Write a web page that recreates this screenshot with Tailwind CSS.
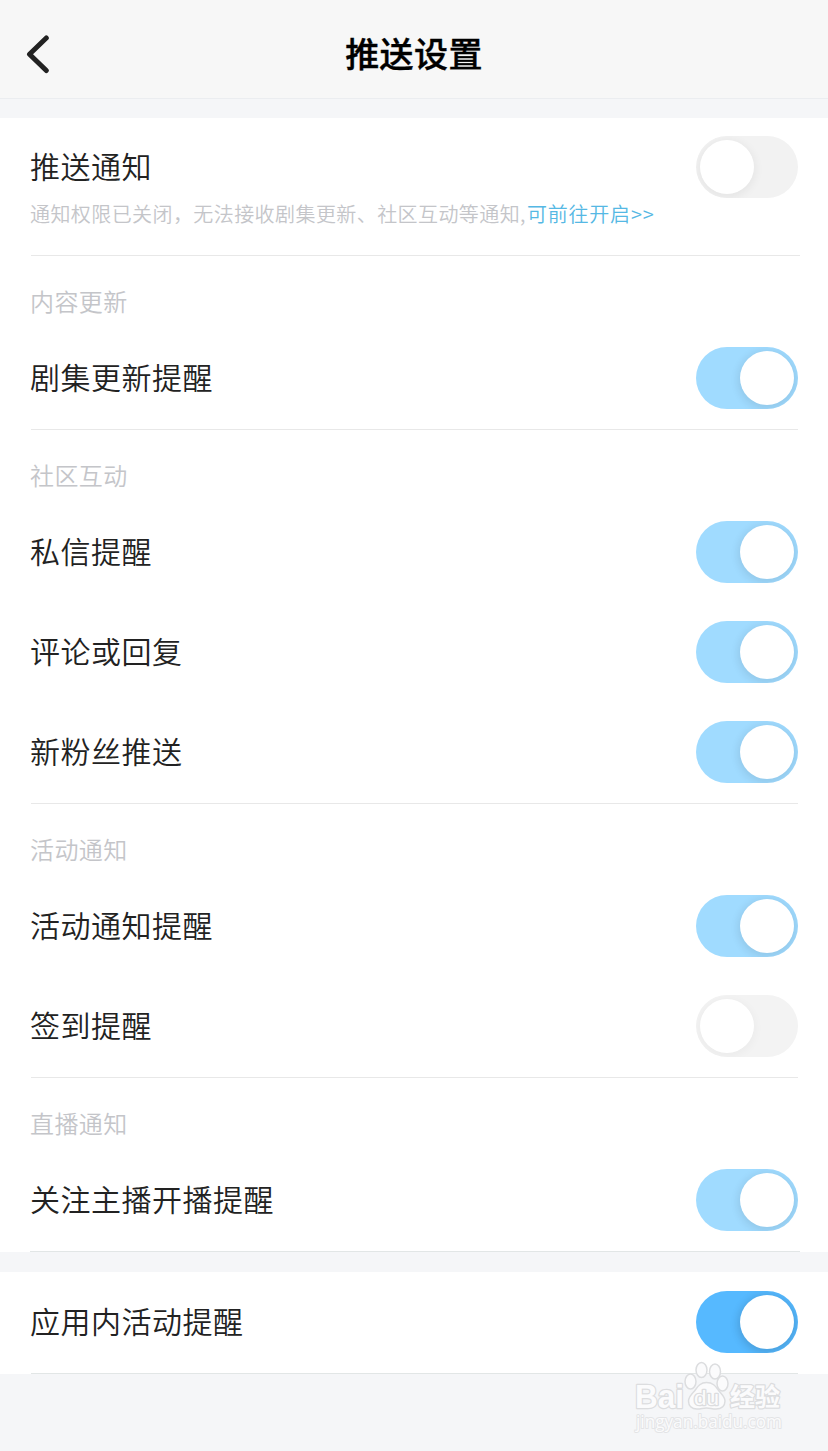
<!DOCTYPE html>
<html lang="zh-CN">
<head>
    <meta charset="UTF-8">
    <meta name="viewport" content="width=device-width, initial-scale=1.0">
    <title>推送设置</title>
    <script src="https://cdn.jsdelivr.net/npm/@tailwindcss/browser@4"></script>
</head>
<body class="bg-[#f5f6f8] font-['Noto_Sans_CJK_SC',sans-serif] font-[350] text-[#222222]">
    <div class="relative w-[828px] h-[1451px] overflow-hidden">

        <header class="grid grid-cols-3 items-center h-[99px] pt-2.5 px-6 bg-[#f7f7f7] border-b border-[#ebedf0]">
            <button class="justify-self-start" aria-label="返回">
                <svg class="w-7 h-10" viewBox="0 0 28 40" fill="none" stroke="#222" stroke-width="5" stroke-linecap="round" stroke-linejoin="round">
                    <path d="M22.3 4 5.5 20.2 22.3 36.5"/>
                </svg>
            </button>
            <h1 class="justify-self-center pb-0.5 text-[34px] leading-10 tracking-[0.4px] font-medium text-black whitespace-nowrap [-webkit-text-stroke:0.4px_black]">推送设置</h1>
        </header>

        <main class="mt-[19px]">
            <!-- Notificaciones generales -->
            <section class="h-[138px] bg-white px-[30px] pt-[18px] flex flex-col">
                <div class="flex justify-between items-center h-[62px]">
                    <span class="pb-1 text-[30px] leading-10 tracking-[0.5px]">推送通知</span>
                    <div class="w-[102px] h-[62px] rounded-full bg-[#f2f2f2] p-1 overflow-hidden">
                        <div class="size-[54px] rounded-full bg-white shadow-[0_2px_8px_2px_rgba(0,0,0,0.05)]"></div>
                    </div>
                </div>
                <p class="mt-1 text-xl leading-6 tracking-[0.42px] text-[#c4c5c9] whitespace-nowrap">通知权限已关闭，无法接收剧集更新、社区互动等通知,<a class="ml-px tracking-[0.8px] text-[#55b8e4]">可前往开启&gt;&gt;</a></p>
                <div class="mt-auto h-px w-[769px] ml-px bg-[#e8e8e8]"></div>
            </section>

            <section class="bg-white px-[30px]">
                <h2 class="h-[72px] pt-[33px] text-2xl leading-6 tracking-[0.4px] font-[350] text-[#c4c5c9]">内容更新</h2>
                <div class="flex justify-between items-center h-[100px]">
                    <span class="pb-1 text-[30px] leading-10 tracking-[0.5px]">剧集更新提醒</span>
                    <div class="w-[102px] h-[62px] rounded-full bg-[#a0dbff] p-1 overflow-hidden flex justify-end">
                        <div class="size-[54px] rounded-full bg-white shadow-[0_2px_8px_2px_rgba(0,0,0,0.09)]"></div>
                    </div>
                </div>
                <div class="mt-px h-px ml-px bg-[#e8e8e8]"></div>
            </section>

            <section class="bg-white px-[30px]">
                <h2 class="h-[72px] pt-[33px] text-2xl leading-6 tracking-[0.4px] font-[350] text-[#c4c5c9]">社区互动</h2>
                <div class="flex justify-between items-center h-[100px]">
                    <span class="pb-1 text-[30px] leading-10 tracking-[0.5px]">私信提醒</span>
                    <div class="w-[102px] h-[62px] rounded-full bg-[#a0dbff] p-1 overflow-hidden flex justify-end">
                        <div class="size-[54px] rounded-full bg-white shadow-[0_2px_8px_2px_rgba(0,0,0,0.09)]"></div>
                    </div>
                </div>
                <div class="flex justify-between items-center h-[100px]">
                    <span class="pb-1 text-[30px] leading-10 tracking-[0.5px]">评论或回复</span>
                    <div class="w-[102px] h-[62px] rounded-full bg-[#a0dbff] p-1 overflow-hidden flex justify-end">
                        <div class="size-[54px] rounded-full bg-white shadow-[0_2px_8px_2px_rgba(0,0,0,0.09)]"></div>
                    </div>
                </div>
                <div class="flex justify-between items-center h-[100px]">
                    <span class="pb-1 text-[30px] leading-10 tracking-[0.5px]">新粉丝推送</span>
                    <div class="w-[102px] h-[62px] rounded-full bg-[#a0dbff] p-1 overflow-hidden flex justify-end">
                        <div class="size-[54px] rounded-full bg-white shadow-[0_2px_8px_2px_rgba(0,0,0,0.09)]"></div>
                    </div>
                </div>
                <div class="mt-px h-px ml-px bg-[#e8e8e8]"></div>
            </section>

            <section class="bg-white px-[30px]">
                <h2 class="h-[72px] pt-[33px] text-2xl leading-6 tracking-[0.4px] font-[350] text-[#c4c5c9]">活动通知</h2>
                <div class="flex justify-between items-center h-[100px]">
                    <span class="pb-1 text-[30px] leading-10 tracking-[0.5px]">活动通知提醒</span>
                    <div class="w-[102px] h-[62px] rounded-full bg-[#a0dbff] p-1 overflow-hidden flex justify-end">
                        <div class="size-[54px] rounded-full bg-white shadow-[0_2px_8px_2px_rgba(0,0,0,0.09)]"></div>
                    </div>
                </div>
                <div class="flex justify-between items-center h-[100px]">
                    <span class="pb-1 text-[30px] leading-10 tracking-[0.5px]">签到提醒</span>
                    <div class="w-[102px] h-[62px] rounded-full bg-[#f3f3f3] p-1 overflow-hidden">
                        <div class="size-[54px] rounded-full bg-white shadow-[0_2px_8px_2px_rgba(0,0,0,0.03)]"></div>
                    </div>
                </div>
                <div class="mt-px h-px ml-px bg-[#e8e8e8]"></div>
            </section>

            <section class="bg-white px-[30px]">
                <h2 class="h-[72px] pt-[33px] text-2xl leading-6 tracking-[0.4px] font-[350] text-[#c4c5c9]">直播通知</h2>
                <div class="flex justify-between items-center h-[100px]">
                    <span class="pb-1 text-[30px] leading-10 tracking-[0.5px]">关注主播开播提醒</span>
                    <div class="w-[102px] h-[62px] rounded-full bg-[#a0dbff] p-1 overflow-hidden flex justify-end">
                        <div class="size-[54px] rounded-full bg-white shadow-[0_2px_8px_2px_rgba(0,0,0,0.09)]"></div>
                    </div>
                </div>
                <div class="mt-px h-px w-[770px] bg-[#e2e6e6]"></div>
            </section>

            <section class="mt-5 bg-white px-[30px]">
                <div class="flex justify-between items-center h-[100px]">
                    <span class="pb-1 text-[30px] leading-10 tracking-[0.5px]">应用内活动提醒</span>
                    <div class="w-[102px] h-[62px] rounded-full bg-[#56b9ff] p-1 overflow-hidden flex justify-end">
                        <div class="size-[54px] rounded-full bg-white shadow-[0_2px_8px_2px_rgba(0,0,0,0.14)]"></div>
                    </div>
                </div>
                <div class="mt-px h-px ml-px bg-[#e2e6e6]"></div>
            </section>
        </main>

        <!-- Marca de agua -->
        <svg class="absolute left-[628px] top-[1356px]" width="170" height="80" viewBox="0 0 170 80" fill="#fbfbfc" stroke="#dcdddf" stroke-width="1.5" stroke-linejoin="round">
            <ellipse cx="62.5" cy="25.5" rx="5.5" ry="7.5"/>
            <ellipse cx="73.5" cy="14" rx="5.5" ry="7.5"/>
            <ellipse cx="87" cy="15.5" rx="5.5" ry="7.5"/>
            <ellipse cx="94.5" cy="27.5" rx="5.5" ry="7.5"/>
            <path d="M78.5 26.5C72 26.5 69.5 31 66.5 35C63 38.5 60.500 41 60.500 45C60.500 50 64 53 69 53C73 53 75 52 78.500 52C82 52 84 53 88 53C93.500 53 97 50 97 45C97 41 94 38.500 91 35C88 31 85.500 26.500 78.500 26.500Z"/>
            <g paint-order="stroke" stroke-width="2.5">
                <text x="7" y="51.5" font-family="Liberation Sans" font-weight="700" font-size="33" textLength="49" lengthAdjust="spacingAndGlyphs">Bai</text>
                <text x="66" y="49" font-family="Liberation Sans" font-weight="400" font-size="20" textLength="25" lengthAdjust="spacingAndGlyphs">du</text>
                <text x="102" y="50" font-family="Noto Sans CJK SC" font-weight="700" font-size="25" textLength="50" lengthAdjust="spacingAndGlyphs">经验</text>
                <text x="8" y="72" stroke="#e3e4e6" stroke-width="2" font-family="Open Sans" font-weight="400" font-size="18" textLength="146" lengthAdjust="spacingAndGlyphs">jingyan.baidu.com</text>
            </g>
        </svg>
    </div>
</body>
</html>
